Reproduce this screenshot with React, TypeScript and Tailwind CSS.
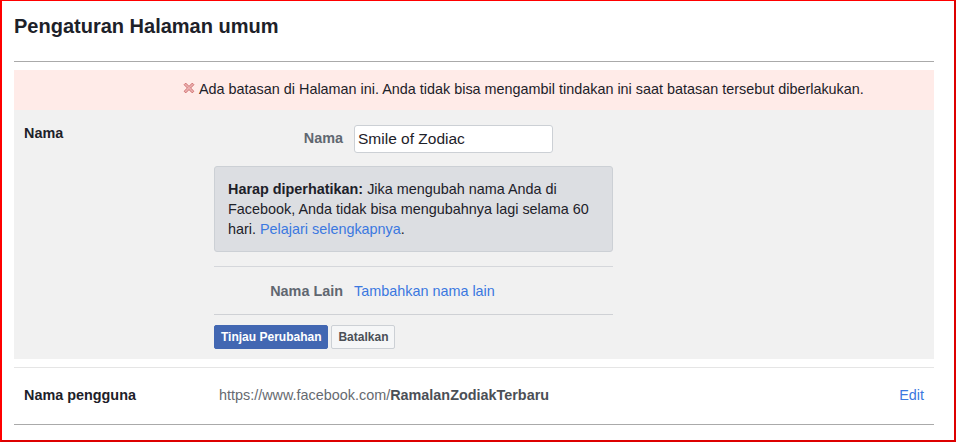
export default function App() {
  const font = { fontFamily: '"Liberation Sans", Arial, sans-serif' };

  return (
    <div
      className="w-[956px] h-[442px] bg-white border-t border-l-2 border-l-[#ff0000] border-t-[#ff0000] border-r-2 border-r-[#dd0000] border-b-2 border-b-[#dd0000] pl-[12px] pr-[20px] text-[#1d2129]"
      style={font}
    >
      {/* Title */}
      <h1 className="pt-[13px] text-[20px] leading-[24px] font-bold text-[#1d2129]">Pengaturan Halaman umum</h1>
      <div className="mt-[23px] h-px bg-[#aaaaaa]" />

      {/* Restriction banner */}
      <div className="mt-[8px] h-[40px] bg-[#ffebe8] flex items-center pl-[169px] text-[14.4px] text-[#1d2129]">
        <svg width="12" height="12" viewBox="0 0 11 11" className="mr-[4px] -mt-[5px] shrink-0">
          <path
            d="M1 2.5 L2.5 1 L5.5 4 L8.5 1 L10 2.5 L7 5.5 L10 8.5 L8.5 10 L5.5 7 L2.5 10 L1 8.5 L4 5.5 Z"
            fill="#eab0b0"
            stroke="#c85a5a"
            strokeWidth="0.7"
            strokeLinejoin="round"
          />
        </svg>
        <span>Ada batasan di Halaman ini. Anda tidak bisa mengambil tindakan ini saat batasan tersebut diberlakukan.</span>
      </div>

      {/* Name section */}
      <div className="bg-[#f1f1f1] flex pl-[10px] pt-[15px] pb-[10px]">
        <div className="w-[190px] shrink-0 text-[14.4px] font-bold leading-[16px]">Nama</div>
        <div className="w-[399px]">
          <div className="flex items-center gap-[11px]">
            <label className="w-[129px] text-right text-[14.4px] font-bold text-[#606770]">Nama</label>
            <div className="w-[199px] h-[28px] bg-white border border-[#ccd0d5] rounded-[3px] flex items-center px-[3px] text-[15.5px] text-[#1d2129]">
              Smile of Zodiac
            </div>
          </div>

          <div className="mt-[13px] bg-[#dcdee2] border border-[#ccd0d5] rounded-[3px] px-[13px] py-[12px] text-[14.4px] leading-[20px] text-[#1d2129]">
            <span className="font-bold">Harap diperhatikan:</span> Jika mengubah nama Anda di Facebook, Anda tidak bisa
            mengubahnya lagi selama 60 hari. <span className="text-[#3b78e0]">Pelajari selengkapnya</span>.
          </div>

          <div className="mt-[14px] h-px bg-[#d5d7db]" />
          <div className="h-[47px] flex items-center gap-[11px] text-[14.4px] pt-[3px]">
            <span className="w-[129px] text-right font-bold text-[#606770]">Nama Lain</span>
            <span className="text-[#3b78e0]">Tambahkan nama lain</span>
          </div>
          <div className="h-px bg-[#cfd1d5]" />

          <div className="mt-[10px] flex gap-[3px]">
            <button className="h-[24px] px-[6px] bg-[#4267b2] border border-[#4267b2] rounded-[2px] text-white text-[12px] font-bold">
              Tinjau Perubahan
            </button>
            <button className="h-[24px] w-[64px] bg-[#f5f6f7] border border-[#ccd0d5] rounded-[2px] text-[#4b4f56] text-[12px] font-bold">
              Batalkan
            </button>
          </div>
        </div>
      </div>

      {/* Username row */}
      <div className="mt-[8px] h-px bg-[#e5e5e5]" />
      <div className="h-[56px] flex items-center pl-[10px] pr-[10px] text-[14.4px]">
        <span className="w-[195px] shrink-0 font-bold">Nama pengguna</span>
        <span className="text-[#666a70]">
          https://www.facebook.com/<span className="font-bold text-[#4b4f56]">RamalanZodiakTerbaru</span>
        </span>
        <span className="ml-auto text-[#3b78e0]">Edit</span>
      </div>
      <div className="h-px bg-[#aaaaaa]" />
    </div>
  );
}
